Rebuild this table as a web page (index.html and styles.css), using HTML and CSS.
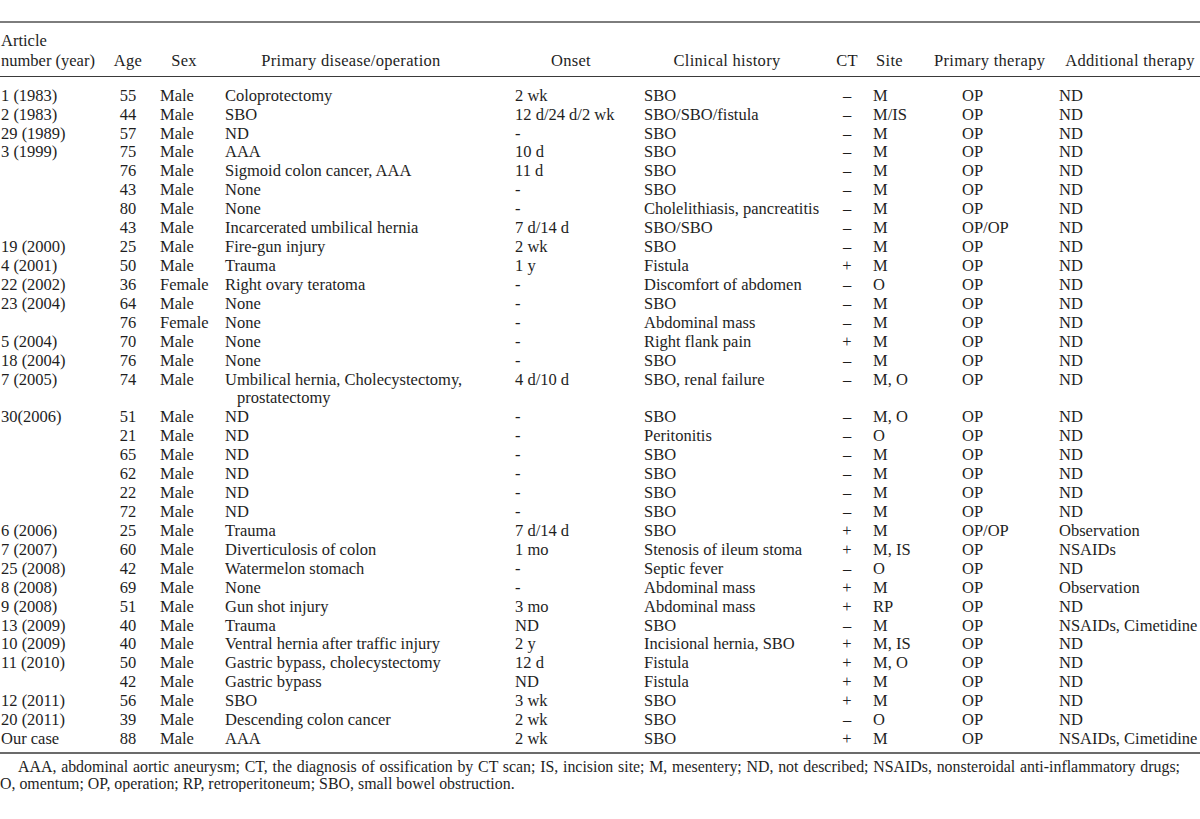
FILE: index.html
```html
<!DOCTYPE html>
<html lang="en">
<head>
<meta charset="utf-8">
<title>Table</title>
<link rel="stylesheet" href="styles.css">
</head>
<body>
<div class="page">
  <div class="tbl-wrap">
    <table class="tbl">
      <colgroup>
        <col class="w-art"><col class="w-age"><col class="w-sex"><col class="w-dis"><col class="w-ons"><col class="w-his"><col class="w-ct"><col class="w-site"><col class="w-pt"><col class="w-at">
      </colgroup>
      <thead>
        <tr>
          <th class="c-art">Article<br>number (year)</th>
          <th class="c-age">Age</th>
          <th class="c-sex">Sex</th>
          <th class="c-dis">Primary disease/operation</th>
          <th class="c-ons">Onset</th>
          <th class="c-his">Clinical history</th>
          <th class="c-ct">CT</th>
          <th class="c-site">Site</th>
          <th class="c-pt">Primary therapy</th>
          <th class="c-at">Additional therapy</th>
        </tr>
      </thead>
      <tbody>
        <tr><td class="c-art">1 (1983)</td><td class="c-age">55</td><td class="c-sex">Male</td><td class="c-dis">Coloprotectomy</td><td class="c-ons">2 wk</td><td class="c-his">SBO</td><td class="c-ct">–</td><td class="c-site">M</td><td class="c-pt">OP</td><td class="c-at">ND</td></tr>
        <tr><td class="c-art">2 (1983)</td><td class="c-age">44</td><td class="c-sex">Male</td><td class="c-dis">SBO</td><td class="c-ons">12 d/24 d/2 wk</td><td class="c-his">SBO/SBO/fistula</td><td class="c-ct">–</td><td class="c-site">M/IS</td><td class="c-pt">OP</td><td class="c-at">ND</td></tr>
        <tr><td class="c-art">29 (1989)</td><td class="c-age">57</td><td class="c-sex">Male</td><td class="c-dis">ND</td><td class="c-ons">-</td><td class="c-his">SBO</td><td class="c-ct">–</td><td class="c-site">M</td><td class="c-pt">OP</td><td class="c-at">ND</td></tr>
        <tr><td class="c-art">3 (1999)</td><td class="c-age">75</td><td class="c-sex">Male</td><td class="c-dis">AAA</td><td class="c-ons">10 d</td><td class="c-his">SBO</td><td class="c-ct">–</td><td class="c-site">M</td><td class="c-pt">OP</td><td class="c-at">ND</td></tr>
        <tr><td class="c-art"></td><td class="c-age">76</td><td class="c-sex">Male</td><td class="c-dis">Sigmoid colon cancer, AAA</td><td class="c-ons">11 d</td><td class="c-his">SBO</td><td class="c-ct">–</td><td class="c-site">M</td><td class="c-pt">OP</td><td class="c-at">ND</td></tr>
        <tr><td class="c-art"></td><td class="c-age">43</td><td class="c-sex">Male</td><td class="c-dis">None</td><td class="c-ons">-</td><td class="c-his">SBO</td><td class="c-ct">–</td><td class="c-site">M</td><td class="c-pt">OP</td><td class="c-at">ND</td></tr>
        <tr><td class="c-art"></td><td class="c-age">80</td><td class="c-sex">Male</td><td class="c-dis">None</td><td class="c-ons">-</td><td class="c-his">Cholelithiasis, pancreatitis</td><td class="c-ct">–</td><td class="c-site">M</td><td class="c-pt">OP</td><td class="c-at">ND</td></tr>
        <tr><td class="c-art"></td><td class="c-age">43</td><td class="c-sex">Male</td><td class="c-dis">Incarcerated umbilical hernia</td><td class="c-ons">7 d/14 d</td><td class="c-his">SBO/SBO</td><td class="c-ct">–</td><td class="c-site">M</td><td class="c-pt">OP/OP</td><td class="c-at">ND</td></tr>
        <tr><td class="c-art">19 (2000)</td><td class="c-age">25</td><td class="c-sex">Male</td><td class="c-dis">Fire-gun injury</td><td class="c-ons">2 wk</td><td class="c-his">SBO</td><td class="c-ct">–</td><td class="c-site">M</td><td class="c-pt">OP</td><td class="c-at">ND</td></tr>
        <tr><td class="c-art">4 (2001)</td><td class="c-age">50</td><td class="c-sex">Male</td><td class="c-dis">Trauma</td><td class="c-ons">1 y</td><td class="c-his">Fistula</td><td class="c-ct">+</td><td class="c-site">M</td><td class="c-pt">OP</td><td class="c-at">ND</td></tr>
        <tr><td class="c-art">22 (2002)</td><td class="c-age">36</td><td class="c-sex">Female</td><td class="c-dis">Right ovary teratoma</td><td class="c-ons">-</td><td class="c-his">Discomfort of abdomen</td><td class="c-ct">–</td><td class="c-site">O</td><td class="c-pt">OP</td><td class="c-at">ND</td></tr>
        <tr><td class="c-art">23 (2004)</td><td class="c-age">64</td><td class="c-sex">Male</td><td class="c-dis">None</td><td class="c-ons">-</td><td class="c-his">SBO</td><td class="c-ct">–</td><td class="c-site">M</td><td class="c-pt">OP</td><td class="c-at">ND</td></tr>
        <tr><td class="c-art"></td><td class="c-age">76</td><td class="c-sex">Female</td><td class="c-dis">None</td><td class="c-ons">-</td><td class="c-his">Abdominal mass</td><td class="c-ct">–</td><td class="c-site">M</td><td class="c-pt">OP</td><td class="c-at">ND</td></tr>
        <tr><td class="c-art">5 (2004)</td><td class="c-age">70</td><td class="c-sex">Male</td><td class="c-dis">None</td><td class="c-ons">-</td><td class="c-his">Right flank pain</td><td class="c-ct">+</td><td class="c-site">M</td><td class="c-pt">OP</td><td class="c-at">ND</td></tr>
        <tr><td class="c-art">18 (2004)</td><td class="c-age">76</td><td class="c-sex">Male</td><td class="c-dis">None</td><td class="c-ons">-</td><td class="c-his">SBO</td><td class="c-ct">–</td><td class="c-site">M</td><td class="c-pt">OP</td><td class="c-at">ND</td></tr>
        <tr><td class="c-art">7 (2005)</td><td class="c-age">74</td><td class="c-sex">Male</td><td class="c-dis hang">Umbilical hernia, Cholecystectomy,<br>prostatectomy</td><td class="c-ons">4 d/10 d</td><td class="c-his">SBO, renal failure</td><td class="c-ct">–</td><td class="c-site">M, O</td><td class="c-pt">OP</td><td class="c-at">ND</td></tr>
        <tr><td class="c-art">30(2006)</td><td class="c-age">51</td><td class="c-sex">Male</td><td class="c-dis">ND</td><td class="c-ons">-</td><td class="c-his">SBO</td><td class="c-ct">–</td><td class="c-site">M, O</td><td class="c-pt">OP</td><td class="c-at">ND</td></tr>
        <tr><td class="c-art"></td><td class="c-age">21</td><td class="c-sex">Male</td><td class="c-dis">ND</td><td class="c-ons">-</td><td class="c-his">Peritonitis</td><td class="c-ct">–</td><td class="c-site">O</td><td class="c-pt">OP</td><td class="c-at">ND</td></tr>
        <tr><td class="c-art"></td><td class="c-age">65</td><td class="c-sex">Male</td><td class="c-dis">ND</td><td class="c-ons">-</td><td class="c-his">SBO</td><td class="c-ct">–</td><td class="c-site">M</td><td class="c-pt">OP</td><td class="c-at">ND</td></tr>
        <tr><td class="c-art"></td><td class="c-age">62</td><td class="c-sex">Male</td><td class="c-dis">ND</td><td class="c-ons">-</td><td class="c-his">SBO</td><td class="c-ct">–</td><td class="c-site">M</td><td class="c-pt">OP</td><td class="c-at">ND</td></tr>
        <tr><td class="c-art"></td><td class="c-age">22</td><td class="c-sex">Male</td><td class="c-dis">ND</td><td class="c-ons">-</td><td class="c-his">SBO</td><td class="c-ct">–</td><td class="c-site">M</td><td class="c-pt">OP</td><td class="c-at">ND</td></tr>
        <tr><td class="c-art"></td><td class="c-age">72</td><td class="c-sex">Male</td><td class="c-dis">ND</td><td class="c-ons">-</td><td class="c-his">SBO</td><td class="c-ct">–</td><td class="c-site">M</td><td class="c-pt">OP</td><td class="c-at">ND</td></tr>
        <tr><td class="c-art">6 (2006)</td><td class="c-age">25</td><td class="c-sex">Male</td><td class="c-dis">Trauma</td><td class="c-ons">7 d/14 d</td><td class="c-his">SBO</td><td class="c-ct">+</td><td class="c-site">M</td><td class="c-pt">OP/OP</td><td class="c-at">Observation</td></tr>
        <tr><td class="c-art">7 (2007)</td><td class="c-age">60</td><td class="c-sex">Male</td><td class="c-dis">Diverticulosis of colon</td><td class="c-ons">1 mo</td><td class="c-his">Stenosis of ileum stoma</td><td class="c-ct">+</td><td class="c-site">M, IS</td><td class="c-pt">OP</td><td class="c-at">NSAIDs</td></tr>
        <tr><td class="c-art">25 (2008)</td><td class="c-age">42</td><td class="c-sex">Male</td><td class="c-dis">Watermelon stomach</td><td class="c-ons">-</td><td class="c-his">Septic fever</td><td class="c-ct">–</td><td class="c-site">O</td><td class="c-pt">OP</td><td class="c-at">ND</td></tr>
        <tr><td class="c-art">8 (2008)</td><td class="c-age">69</td><td class="c-sex">Male</td><td class="c-dis">None</td><td class="c-ons">-</td><td class="c-his">Abdominal mass</td><td class="c-ct">+</td><td class="c-site">M</td><td class="c-pt">OP</td><td class="c-at">Observation</td></tr>
        <tr><td class="c-art">9 (2008)</td><td class="c-age">51</td><td class="c-sex">Male</td><td class="c-dis">Gun shot injury</td><td class="c-ons">3 mo</td><td class="c-his">Abdominal mass</td><td class="c-ct">+</td><td class="c-site">RP</td><td class="c-pt">OP</td><td class="c-at">ND</td></tr>
        <tr><td class="c-art">13 (2009)</td><td class="c-age">40</td><td class="c-sex">Male</td><td class="c-dis">Trauma</td><td class="c-ons">ND</td><td class="c-his">SBO</td><td class="c-ct">–</td><td class="c-site">M</td><td class="c-pt">OP</td><td class="c-at">NSAIDs, Cimetidine</td></tr>
        <tr><td class="c-art">10 (2009)</td><td class="c-age">40</td><td class="c-sex">Male</td><td class="c-dis">Ventral hernia after traffic injury</td><td class="c-ons">2 y</td><td class="c-his">Incisional hernia, SBO</td><td class="c-ct">+</td><td class="c-site">M, IS</td><td class="c-pt">OP</td><td class="c-at">ND</td></tr>
        <tr><td class="c-art">11 (2010)</td><td class="c-age">50</td><td class="c-sex">Male</td><td class="c-dis">Gastric bypass, cholecystectomy</td><td class="c-ons">12 d</td><td class="c-his">Fistula</td><td class="c-ct">+</td><td class="c-site">M, O</td><td class="c-pt">OP</td><td class="c-at">ND</td></tr>
        <tr><td class="c-art"></td><td class="c-age">42</td><td class="c-sex">Male</td><td class="c-dis">Gastric bypass</td><td class="c-ons">ND</td><td class="c-his">Fistula</td><td class="c-ct">+</td><td class="c-site">M</td><td class="c-pt">OP</td><td class="c-at">ND</td></tr>
        <tr><td class="c-art">12 (2011)</td><td class="c-age">56</td><td class="c-sex">Male</td><td class="c-dis">SBO</td><td class="c-ons">3 wk</td><td class="c-his">SBO</td><td class="c-ct">+</td><td class="c-site">M</td><td class="c-pt">OP</td><td class="c-at">ND</td></tr>
        <tr><td class="c-art">20 (2011)</td><td class="c-age">39</td><td class="c-sex">Male</td><td class="c-dis">Descending colon cancer</td><td class="c-ons">2 wk</td><td class="c-his">SBO</td><td class="c-ct">–</td><td class="c-site">O</td><td class="c-pt">OP</td><td class="c-at">ND</td></tr>
        <tr><td class="c-art">Our case</td><td class="c-age">88</td><td class="c-sex">Male</td><td class="c-dis">AAA</td><td class="c-ons">2 wk</td><td class="c-his">SBO</td><td class="c-ct">+</td><td class="c-site">M</td><td class="c-pt">OP</td><td class="c-at">NSAIDs, Cimetidine</td></tr>
      </tbody>
    </table>
  </div>
  <div class="notes">
    <p class="note-first">AAA, abdominal aortic aneurysm; CT, the diagnosis of ossification by CT scan; IS, incision site; M, mesentery; ND, not described; NSAIDs, nonsteroidal anti-inflammatory drugs;</p>
    <p class="note-rest">O, omentum; OP, operation; RP, retroperitoneum; SBO, small bowel obstruction.</p>
  </div>
</div>
</body>
</html>
```

FILE: styles.css
```css
html, body {
  margin: 0;
  padding: 0;
  background: #ffffff;
}

body {
  width: 1200px;
  overflow: hidden;
  font-family: "Liberation Serif", "Times New Roman", serif;
  color: #1e1e1e;
}

.page {
  padding-top: 21px;
}

.tbl-wrap {
  border-top: 2px solid #7d7d7d;
  border-bottom: 2px solid #6b6b6b;
}

.tbl {
  width: 1200px;
  table-layout: fixed;
  border-collapse: separate;
  border-spacing: 0;
  font-size: 16.5px;
}

.tbl th,
.tbl td {
  padding: 0;
  white-space: nowrap;
  overflow: visible;
  font-weight: normal;
}

.tbl th {
  line-height: 20px;
  vertical-align: bottom;
  padding-top: 8px;
  padding-bottom: 5px;
  border-bottom: 1px solid #3a3a3a;
  text-align: center;
  letter-spacing: 0.3px;
}

.tbl td {
  line-height: 18.92px;
  vertical-align: top;
  text-align: left;
}

.tbl tbody tr:first-child td {
  padding-top: 9.7px;
}

.tbl tbody tr:last-child td {
  padding-bottom: 3px;
}

/* column widths */
.w-art { width: 110px; }
.w-age { width: 36px; }
.w-sex { width: 69px; }
.w-dis { width: 290px; }
.w-ons { width: 129px; }
.w-his { width: 196px; }
.w-ct { width: 34px; }
.w-site { width: 54px; }
.w-pt { width: 122px; }
.w-at { width: 160px; }

/* header alignment */
.tbl th.c-art { text-align: left; padding-left: 1px; letter-spacing: 0; }
.tbl th.c-sex { padding-left: 7px; }
.tbl th.c-dis { padding-right: 18px; }
.tbl th.c-ons { padding-left: 3px; }
.tbl th.c-his { padding-right: 10px; }
.tbl th.c-site { padding-right: 3px; }
.tbl th.c-pt { padding-left: 16px; }
.tbl th.c-at { padding-left: 20px; }

/* body alignment */
.tbl td.c-art { padding-left: 1px; }
.tbl td.c-age { text-align: center; }
.tbl td.c-sex { padding-left: 14px; }
.tbl td.c-dis { padding-left: 10px; }
.tbl td.c-ons { padding-left: 10px; }
.tbl td.c-his { padding-left: 10px; }
.tbl td.c-ct { text-align: center; }
.tbl td.c-site { padding-left: 9px; }
.tbl td.c-pt { padding-left: 44px; }
.tbl td.c-at { padding-left: 19px; }

.tbl td.hang {
  padding-left: 22px;
  text-indent: -12px;
}

.notes {
  margin-top: 4.3px;
  font-size: 15.9px;
  line-height: 17px;
}

.notes p {
  margin: 0;
  white-space: nowrap;
}

.note-first {
  width: 1162px;
  padding-left: 18px;
  white-space: normal;
  text-align: justify;
  text-align-last: justify;
}
```
